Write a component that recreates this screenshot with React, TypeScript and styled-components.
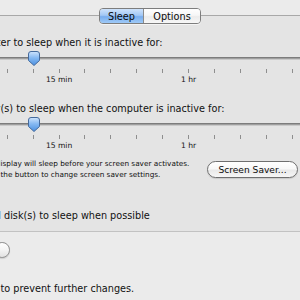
import React from "react";
import styled, { createGlobalStyle } from "styled-components";

const GlobalStyle = createGlobalStyle`
  html, body {
    margin: 0;
    padding: 0;
    background: #ebebeb;
    overflow: hidden;
  }
  body {
    font-family: "DejaVu Sans", "Noto Sans", sans-serif;
    font-size: 9.7px;
    color: #111;
  }
`;

const Window = styled.div`
  width: 300px;
  height: 300px;
  overflow: hidden;
  display: flex;
  flex-direction: column;
  background: #ebebeb;
`;

const TabBox = styled.div`
  margin-top: 15px;
  border-top: 1px solid #a8a8a8;
  border-bottom: 1px solid #c2c2c2;
  background: #e4e4e4;
  display: flex;
  flex-direction: column;
  padding-bottom: 9px;
`;

const Segmented = styled.div`
  align-self: center;
  margin-top: -8px;
  display: flex;
  height: 16px;
  box-sizing: border-box;
  border: 1px solid #7d7d7d;
  border-radius: 4px;
  overflow: hidden;
  box-shadow: 0 1px 0 rgba(255, 255, 255, 0.6);
`;

const Segment = styled.div<{ $active?: boolean; $w: number }>`
  width: ${(p) => p.$w}px;
  display: flex;
  align-items: center;
  justify-content: center;
  font-size: 9.7px;
  color: #0a0a0a;
  background: ${(p) =>
    p.$active
      ? "linear-gradient(#cfe3fb 0%, #a3c8f5 45%, #78adee 55%, #9fcaf7 100%)"
      : "linear-gradient(#ffffff 0%, #f6f6f6 45%, #ebebeb 55%, #f7f7f7 100%)"};
  & + & {
    border-left: 1px solid #8a8a8a;
  }
`;

const ClipRow = styled.div<{ $pad: number; $mt: number; $lh?: number }>`
  display: flex;
  white-space: pre;
  padding-left: ${(p) => p.$pad}px;
  margin-top: ${(p) => p.$mt}px;
  line-height: ${(p) => p.$lh ?? 12}px;
  height: ${(p) => p.$lh ?? 12}px;
  align-items: center;
`;

const Prefix = styled.span`
  display: flex;
  width: 0;
  justify-content: flex-end;
  align-items: center;
  white-space: pre;
`;

const Clipped: React.FC<{ hidden: React.ReactNode; shown: string; pad: number; mt: number; lh?: number }> = ({
  hidden,
  shown,
  pad,
  mt,
  lh,
}) => (
  <ClipRow $pad={pad} $mt={mt} $lh={lh}>
    <Prefix>{hidden}</Prefix>
    <span>{shown}</span>
  </ClipRow>
);

const SliderWrap = styled.div<{ $mt: number }>`
  margin-top: ${(p) => p.$mt}px;
  display: flex;
  flex-direction: column;
`;

const TrackArea = styled.div`
  position: relative;
  height: 16px;
  display: flex;
  align-items: center;
  padding-top: 1px;
  box-sizing: border-box;
`;

const Track = styled.div`
  width: 100%;
  height: 3px;
  background: linear-gradient(#7c7c7c 0 1px, #9e9e9e 1px 2px, #c9c9c9 2px 3px);
`;

const Thumb = styled.svg`
  position: absolute;
  top: 1px;
  width: 12px;
  height: 15px;
`;

const TickGrid = styled.div`
  display: grid;
  grid-template-columns: repeat(12, 25.9px);
  margin-left: -5.65px;
  margin-top: 3px;
`;

const TickCell = styled.div`
  display: flex;
  flex-direction: column;
  align-items: center;
`;

const Tick = styled.div`
  width: 1px;
  height: 4px;
  background: #8e8e8e;
`;

const TickLabel = styled.div`
  margin-top: 2px;
  font-size: 7.6px;
  line-height: 10px;
  height: 10px;
  white-space: nowrap;
  color: #111;
`;

const Slider: React.FC<{ mt: number; thumbX: number; labels: Record<number, string> }> = ({
  mt,
  thumbX,
  labels,
}) => (
  <SliderWrap $mt={mt}>
    <TrackArea>
      <Track />
      <Thumb viewBox="0 0 12 15" style={{ left: thumbX - 6 }}>
        <defs>
          <linearGradient id="thumbGrad" x1="0" y1="0" x2="0" y2="1">
            <stop offset="0" stopColor="#cfe4fc" />
            <stop offset="0.45" stopColor="#86b9f2" />
            <stop offset="1" stopColor="#4a8fe0" />
          </linearGradient>
        </defs>
        <path
          d="M0.5 3 Q0.5 0.5 3 0.5 H9 Q11.5 0.5 11.5 3 V9.5 L6 14.5 L0.5 9.5 Z"
          fill="url(#thumbGrad)"
          stroke="#456a9c"
          strokeWidth="1"
        />
      </Thumb>
    </TrackArea>
    <TickGrid>
      {Array.from({ length: 12 }).map((_, i) => (
        <TickCell key={i}>
          <Tick />
          {labels[i] ? <TickLabel>{labels[i]}</TickLabel> : null}
        </TickCell>
      ))}
    </TickGrid>
  </SliderWrap>
);

const DescRow = styled.div`
  margin-top: 7px;
  display: flex;
  align-items: center;
  justify-content: space-between;
  padding-right: 2px;
`;

const DescText = styled.div`
  display: flex;
  flex-direction: column;
  font-size: 7.3px;
  min-width: 0;
`;

const PushButton = styled.button`
  flex-shrink: 0;
  width: 91px;
  height: 17px;
  box-sizing: border-box;
  border: 1px solid #6f6f6f;
  border-radius: 9px;
  background: linear-gradient(#ffffff 0%, #f8f8f8 45%, #e9e9e9 55%, #f6f6f6 100%);
  font-family: "DejaVu Sans", "Noto Sans", sans-serif;
  font-size: 9.1px;
  color: #0a0a0a;
  padding: 0;
  margin-top: 1px;
  white-space: nowrap;
  box-shadow: 0 1px 1px rgba(0, 0, 0, 0.12);
`;

const CheckBox = styled.span`
  display: inline-block;
  width: 10px;
  height: 10px;
  box-sizing: border-box;
  border: 1px solid #777;
  border-radius: 2px;
  background: linear-gradient(#fff, #e6e6e6);
  margin-right: 4px;
`;

const Footer = styled.div`
  display: flex;
  flex-direction: column;
`;

const HelpButton = styled.div`
  margin-top: 10px;
  margin-left: -5.6px;
  width: 15.6px;
  height: 15.6px;
  box-sizing: border-box;
  border-radius: 50%;
  border: 1px solid #8c8c8c;
  background: linear-gradient(#ffffff 0%, #f4f4f4 50%, #e2e2e2 100%);
  box-shadow: 0 1px 1px rgba(0, 0, 0, 0.12);
`;

export default function App() {
  return (
    <Window>
      <GlobalStyle />
      <TabBox>
        <Segmented>
          <Segment $active $w={43}>Sleep</Segment>
          <Segment $w={56}>Options</Segment>
        </Segmented>
        <Clipped pad={0.5} mt={13} hidden="Put the comput" shown="er to sleep when it is inactive for:" />
        <Slider mt={1} thumbX={34} labels={{ 2: "15 min", 7: "1 hr" }} />
        <Clipped
          pad={0.5}
          mt={18}
          hidden="Put the display"
          shown="(s) to sleep when the computer is inactive for:"
        />
        <Slider mt={1} thumbX={34} labels={{ 2: "15 min", 7: "1 hr" }} />
        <DescRow>
          <DescText>
            <Clipped pad={0.5} mt={0} lh={11} hidden="The d" shown="isplay will sleep before your screen saver activates." />
            <Clipped pad={0.5} mt={0} lh={11} hidden="Click " shown="the button to change screen saver settings." />
          </DescText>
          <PushButton type="button">Screen Saver...</PushButton>
        </DescRow>
        <Clipped
          pad={4}
          mt={30}
          hidden={
            <>
              <CheckBox />
              {"Put the hard "}
            </>
          }
          shown="disk(s) to sleep when possible"
        />
      </TabBox>
      <Footer>
        <HelpButton aria-label="Help" />
        <Clipped pad={0.5} mt={25} hidden="Click the lock " shown="to prevent further changes." />
      </Footer>
    </Window>
  );
}
